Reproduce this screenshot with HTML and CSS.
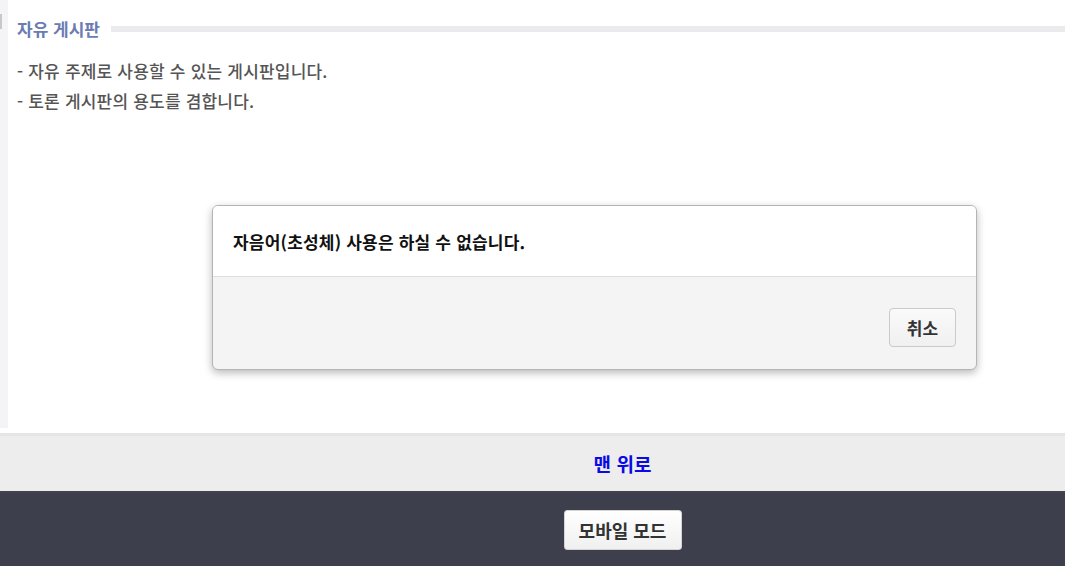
FILE: index.html
```html
<!DOCTYPE html>
<html lang="ko">
<head>
    <meta charset="UTF-8">
    <meta name="viewport" content="width=device-width, initial-scale=1.0">
    <title>자유 게시판</title>
    <link rel="stylesheet" href="styles.css">
</head>
<body>
    <div class="board">
        <div class="side"><span class="side-mark"></span></div>
        <div class="content">
            <div class="board-title">
                <h2>자유 게시판</h2>
                <span class="title-line"></span>
            </div>
            <p class="desc">- 자유 주제로 사용할 수 있는 게시판입니다.</p>
            <p class="desc">- 토론 게시판의 용도를 겸합니다.</p>
        </div>
    </div>

    <div class="to-top">
        <a href="#">맨 위로</a>
    </div>

    <footer>
        <button class="mobile-btn">모바일 모드</button>
    </footer>

    <!-- 경고 대화상자 -->
    <div class="dialog">
        <div class="dialog-body">자음어(초성체) 사용은 하실 수 없습니다.</div>
        <div class="dialog-foot">
            <button class="btn">취소</button>
        </div>
    </div>
</body>
</html>
```

FILE: styles.css
```css
body {
    font-family: "Noto Sans CJK KR", "Noto Sans", sans-serif;
    margin: 0;
    padding: 0;
    background-color: #fff;
}
.board {
    display: flex;
    height: 428px;
}
.side {
    width: 8px;
    background-color: #f4f4f6;
    padding-top: 14px;
}
.side-mark {
    display: block;
    width: 2px;
    height: 15px;
    background-color: #c8c8cc;
}
.content {
    flex: 1;
    padding: 17px 0 0 9px;
}
.board-title {
    display: flex;
    align-items: center;
    gap: 11px;
    margin-bottom: 15px;
}
.board-title h2 {
    margin: 0;
    font-size: 17px;
    font-weight: 700;
    color: #6a7cb2;
    line-height: 24px;
}
.title-line {
    flex: 1;
    height: 6px;
    margin-top: -1px;
    background-color: #ebebee;
}
.desc {
    margin: 0;
    font-size: 17px;
    font-weight: 500;
    color: #555;
    line-height: 30px;
    letter-spacing: 0.2px;
}
.to-top {
    margin-top: 5px;
    height: 55px;
    border-top: 3px solid #e6e5e5;
    background-color: #eeeded;
    display: flex;
    align-items: center;
    justify-content: center;
    padding-left: 180px;
}
.to-top a {
    color: #0a0ae6;
    font-size: 19px;
    font-weight: 700;
    text-decoration: none;
}
footer {
    height: 75px;
    background-color: #3d404c;
    border-top: 2px solid #41444f;
    box-sizing: border-box;
    display: flex;
    align-items: center;
    justify-content: center;
    padding-left: 180px;
}
.mobile-btn {
    width: 118px;
    height: 40px;
    border: 1px solid #d4d4d4;
    border-radius: 3px;
    background: linear-gradient(#ffffff, #f0f0f0);
    font-family: inherit;
    font-size: 18px;
    font-weight: 700;
    color: #333;
}
.dialog {
    position: absolute;
    left: 212px;
    top: 205px;
    width: 763px;
    border: 1px solid #b4b4b4;
    border-radius: 6px;
    background-color: #f4f4f4;
    box-shadow: 0 3px 9px rgba(0, 0, 0, 0.28);
    overflow: hidden;
}
.dialog-body {
    background-color: #fff;
    height: 70px;
    padding: 0 20px;
    display: flex;
    align-items: center;
    font-size: 17px;
    font-weight: 700;
    color: #111;
    letter-spacing: 0.2px;
    border-bottom: 1px solid #dedede;
}
.dialog-foot {
    height: 92px;
    display: flex;
    align-items: flex-start;
    justify-content: flex-end;
    padding: 31px 20px 0 0;
    box-sizing: border-box;
}
.btn {
    width: 67px;
    height: 39px;
    border: 1px solid #cacaca;
    border-radius: 4px;
    background: linear-gradient(#fafafa, #f0f0f0);
    font-family: inherit;
    font-size: 17px;
    font-weight: 700;
    color: #333;
}
```
